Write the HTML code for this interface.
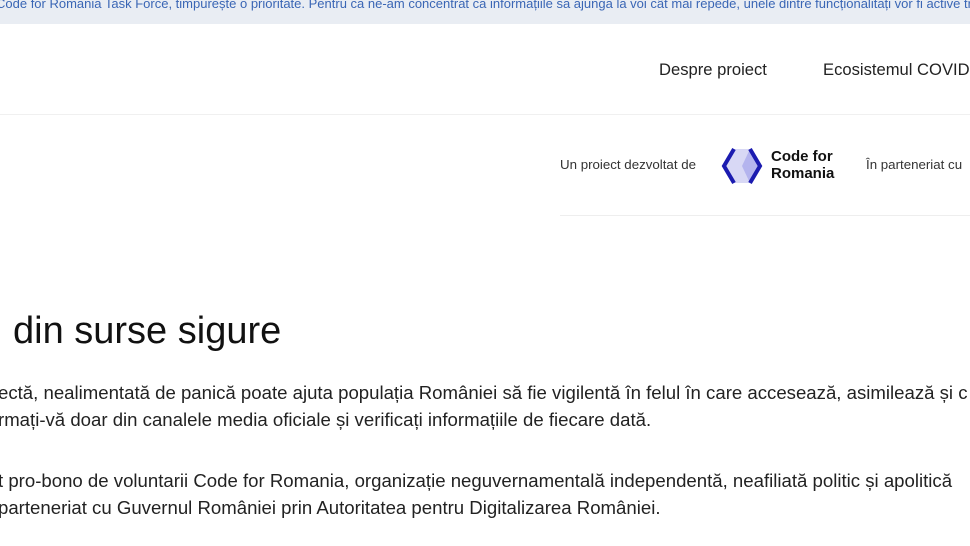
<!DOCTYPE html>
<html><head><meta charset="utf-8"><style>
body{margin:0;width:970px;height:546px;overflow:hidden;background:#fff;font-family:"Liberation Sans",sans-serif;color:#222;position:relative}
.ban{position:absolute;left:0;top:0;width:970px;height:24px;background:#e9edf3;overflow:hidden}
.ban span{position:absolute;left:-4px;top:-4px;font-size:13px;color:#3a66b5;white-space:nowrap}
.t{position:absolute;white-space:nowrap}
.hr1{position:absolute;left:0;top:114px;width:970px;height:1px;background:#f0f0f0}
.hr2{position:absolute;left:560px;top:215px;width:410px;height:1px;background:#eee}
</style></head><body>
<div class="ban"><span>Code for Romania Task Force, timpurește o prioritate. Pentru că ne-am concentrat ca informațiile să ajungă la voi cât mai repede, unele dintre funcționalități vor fi active treptat</span></div>
<div class="t" style="left:659px;top:60px;font-size:16.6px;color:#222">Despre proiect</div>
<div class="t" style="left:823px;top:60px;font-size:16.6px;color:#222">Ecosistemul COVID-19</div>
<div class="hr1"></div>
<div class="t" style="left:560px;top:157px;font-size:13.3px;color:#333">Un proiect dezvoltat de</div>
<svg style="position:absolute;left:720px;top:146px" width="44" height="40" viewBox="0 0 44 38">
<polygon points="14,2 30,2 42,19 30,36 14,36 2,19" fill="#d8d8f5"/>
<polygon points="22,19 30,2 42,19 30,36" fill="#b4b4ee"/>
<polyline points="14,2 4,19 14,36" fill="none" stroke="#1b1bb0" stroke-width="4"/>
<polyline points="30,2 40,19 30,36" fill="none" stroke="#1b1bb0" stroke-width="4"/>
</svg>
<div class="t" style="left:771px;top:148px;font-size:15px;font-weight:bold;line-height:17px;color:#111">Code for<br>Romania</div>
<div class="t" style="left:866px;top:157px;font-size:13.3px;color:#333">În parteneriat cu</div>
<div class="hr2"></div>
<div class="t" style="left:-6px;top:310px;font-size:38px;color:#111">i din surse sigure</div>
<div class="t" style="left:-2px;top:379px;font-size:18.6px;color:#222;line-height:27px">ectă, nealimentată de panică poate ajuta populația României să fie vigilentă în felul în care accesează, asimilează și c<br>rmați-vă doar din canalele media oficiale și verificați informațiile de fiecare dată.</div>
<div class="t" style="left:-2px;top:467px;font-size:18.6px;color:#222;line-height:27px">t pro-bono de voluntarii Code for Romania, organizație neguvernamentală independentă, neafiliată politic și apolitică<br>parteneriat cu Guvernul României prin Autoritatea pentru Digitalizarea României.</div>
</body></html>
